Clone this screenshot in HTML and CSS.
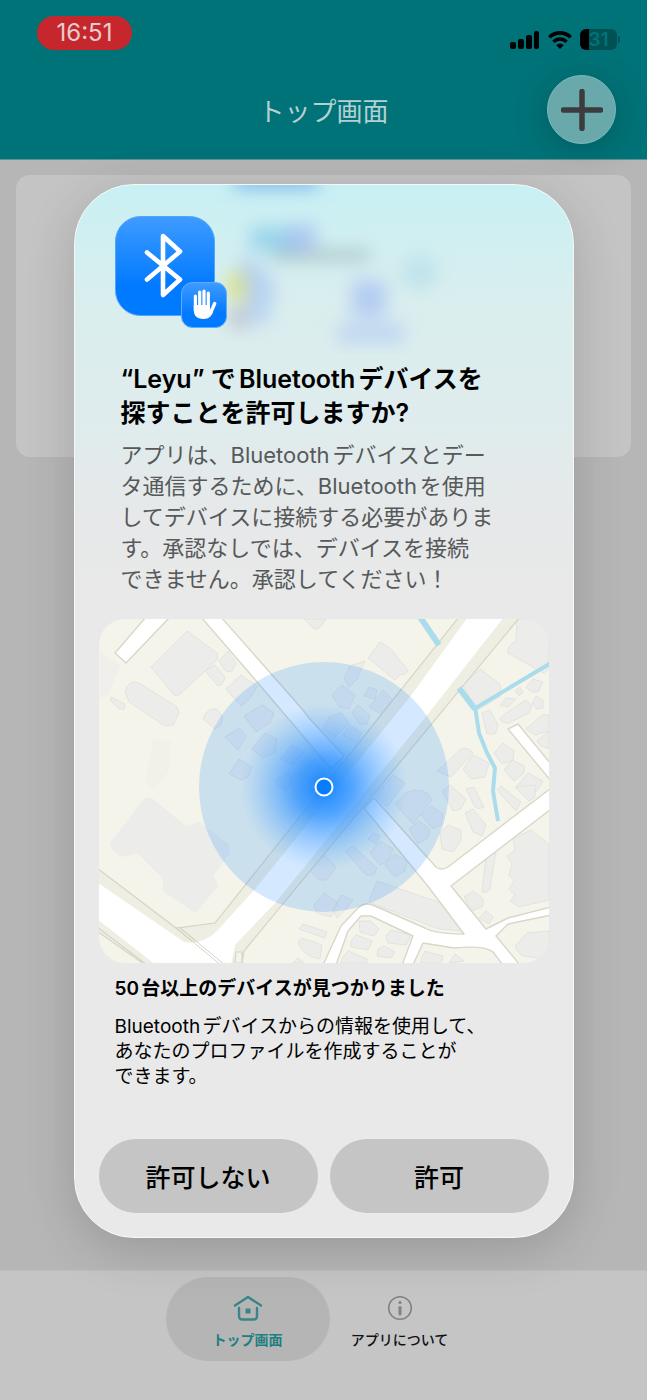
FILE: index.html
```html
<!DOCTYPE html>
<html lang="ja">
<head>
  <meta charset="UTF-8">
  <meta name="viewport" content="width=device-width, initial-scale=1">
  <title>トップ画面</title>
  <link rel="stylesheet" href="styles.css">
</head>
<body>
  <header class="app-header">
    <div class="status-bar">
      <span class="clock">16:51</span>
      <div class="status-icons">
        <svg width="30" height="20" viewBox="0 0 30 20" aria-hidden="true">
          <rect x="0" y="12" width="6" height="7" rx="2"/>
          <rect x="8" y="9" width="6" height="10" rx="2"/>
          <rect x="16" y="5" width="6" height="14" rx="2"/>
          <rect x="24" y="1" width="5" height="18" rx="2"/>
        </svg>
        <svg width="26" height="20" viewBox="0 0 26 20" aria-hidden="true">
          <path d="M2.3 7.2a15.4 15.4 0 0 1 21.4 0" fill="none" stroke="#000" stroke-width="3.6"/>
          <path d="M6.4 11.7a9.6 9.6 0 0 1 13.2 0" fill="none" stroke="#000" stroke-width="3.4"/>
          <path d="M13 19l-3.6-3.7a5.2 5.2 0 0 1 7.2 0z"/>
        </svg>
        <div class="battery">31</div>
      </div>
    </div>
    <div class="nav-bar">
      <h1>トップ画面</h1>
      <button class="add-button" type="button" aria-label="追加">
        <svg width="42" height="42" viewBox="0 0 42 42" aria-hidden="true">
          <path d="M21 2.500V39.500M2.500 21H39.500" stroke="#3c3c3e" stroke-width="5.500" stroke-linecap="round"/>
        </svg>
      </button>
    </div>
  </header>

  <main>
    <div class="card"></div>
  </main>

  <nav class="tab-bar">
    <a class="tab active" href="#top">
      <svg width="30" height="26" viewBox="0 0 30 26" fill="none" stroke="#3a8586" stroke-width="2.400" stroke-linecap="round" stroke-linejoin="round" aria-hidden="true">
        <path d="M2 10.500L15 2l13 8.500"/>
        <path d="M6 13v8.500a3 3 0 0 0 3 3h12a3 3 0 0 0 3-3V13"/>
        <rect x="12.500" y="13.500" width="5" height="5" fill="#3a8586" stroke="none"/>
      </svg>
      トップ画面
    </a>
    <a class="tab" href="#about">
      <svg width="26" height="26" viewBox="0 0 26 26" fill="none" stroke="#828282" aria-hidden="true">
        <circle cx="13" cy="13" r="11.300" stroke-width="1.500"/>
        <path d="M13 12.500v6.500" stroke-width="3" stroke-linecap="round"/>
        <circle cx="13" cy="7.500" r="1.600" fill="#828282" stroke="none"/>
      </svg>
      アプリについて
    </a>
  </nav>

  <div class="overlay">
    <section class="dialog" role="dialog" aria-labelledby="dialog-title">
      <!-- app content showing through the glass -->
      <svg class="glass" viewBox="0 0 500 170" aria-hidden="true">
        <defs><filter id="soft" x="-50%" y="-50%" width="200%" height="200%"><feGaussianBlur stdDeviation="9"/></filter></defs>
        <g filter="url(#soft)">
          <rect x="160" y="-10" width="84" height="12" fill="#5f9fe6" opacity=".9"/>
          <rect x="176" y="42" width="44" height="24" fill="#8ccdea" opacity=".8"/>
          <rect x="212" y="40" width="30" height="24" fill="#a4bdf2" opacity=".8"/>
          <rect x="198" y="66" width="98" height="9" fill="#8ea5aa" opacity=".7"/>
          <ellipse cx="165" cy="101" rx="11" ry="16" fill="#dde36a"/>
          <path d="M164 74h16l22 26l-10 40h-16z" fill="#a9c6f4" opacity=".7"/>
          <rect x="156" y="122" width="16" height="22" fill="#b2aeb8" opacity=".7"/>
          <rect x="278" y="96" width="34" height="36" fill="#a9c3f4" opacity=".8"/>
          <rect x="264" y="140" width="66" height="18" fill="#a9c3f4" opacity=".6"/>
          <circle cx="346" cy="88" r="18" fill="#b0dcea" opacity=".6"/>
        </g>
      </svg>

      <div class="permission">
        <svg class="app-icon" width="112" height="112" viewBox="0 0 112 112" aria-hidden="true">
          <defs>
            <linearGradient id="blue" x1="0" y1="0" x2="0" y2="1">
              <stop offset="0" stop-color="#3f9bff"/>
              <stop offset=".7" stop-color="#017aff"/>
              <stop offset="1" stop-color="#007aff"/>
            </linearGradient>
          </defs>
          <rect x=".5" y=".5" width="99" height="99" rx="25" fill="url(#blue)" stroke="#4fa6fb"/>
          <path d="M32 36.500L65 63.500L48 79V20L65 35.500L32 63.500" fill="none" stroke="#fff" stroke-width="4.600" stroke-linecap="round" stroke-linejoin="round"/>
          <rect x="66.500" y="66.500" width="45" height="45" rx="11" fill="url(#blue)" stroke="#5dadf8"/>
          <g stroke="#fff" stroke-linecap="round" stroke-width="3.200" fill="none">
            <path d="M80.400 80v14M84.700 76v16M89 75v17M93.300 77v16"/>
            <path d="M99.700 87.500l-4.200 9.500" stroke-width="3.400"/>
          </g>
          <path d="M78.800 89H94.900V94l3.300 1.500C96.500 100 94.500 103 88.500 103C81.500 103 78.800 99.500 78.800 94z" fill="#fff"/>
        </svg>
        <h2 id="dialog-title">“Leyu” でBluetoothデバイスを<br>探すことを許可しますか?</h2>
        <p>アプリは、Bluetoothデバイスとデー<br>タ通信するために、Bluetoothを使用<br>してデバイスに接続する必要がありま<br>す。承認なしでは、デバイスを接続<br>できません。承認してください！</p>
      </div>

      <svg class="map" viewBox="0 0 450 344" preserveAspectRatio="xMidYMid slice" role="img" aria-label="付近の地図">
        <defs>
          <radialGradient id="glow">
            <stop offset="0" stop-color="#0a80ff" stop-opacity=".95"/>
            <stop offset=".35" stop-color="#2a90ff" stop-opacity=".75"/>
            <stop offset=".7" stop-color="#4ba2ff" stop-opacity=".35"/>
            <stop offset="1" stop-color="#6ab2ff" stop-opacity="0"/>
          </radialGradient>
        </defs>
        <rect width="450" height="344" fill="#f5f4ea"/>

        <!-- blocks around the buildings -->
        <path d="M0 32L22 46L8 78H0z" fill="#f0efeb"/>
        <path d="M54 120l18 2l-2 30l-14 18l-10-6z" fill="#f2f1e8"/>

        <!-- buildings -->
        <g fill="#ececea" stroke="#e0dfd9" stroke-width=".8" stroke-linejoin="round">
          <path d="M52 48L88 12l30 22l1 6L80 76l-5 0z"/>
          <path d="M26 72q4-12 14-8l38 24l2 6l-6 12l-8 1l-36-24z"/>
          <path d="M106 52l10-6l10 12q-2 10-8 8zM120 42l9-10l8 12l-4 8q-6 2-8-2z"/>
          <path d="M127 70l15-14l16 11q-4 12-16 20zM104 100q4-12 14-10l6 8l-2 8l-6 4z"/>
          <path d="M12 78l14 7l-1 5l-5 0l-8-8zM205 0h22l-6 8q-4 4-8 0z"/>
          <path d="M11 224L43 182q5-6 11-2L87 207L100 203L130 225L131 234L115 256L119 267L99 292Q97 295 93 292L64 272V260L38 234L25 238Q12 234 11 224z" stroke="none"/>
          <path d="M269 39l12-16l10 6l18 22q0 4-8 5l-5 5z"/>
          <path d="M418 0h32v50q-5 6-9 2l-32-18q-2-6 8-12z"/>
          <path d="M364 66l17-16l20 15l1 12l-25 15z"/>
          <path d="M401 86l6-7l10 1l-8 8zM416 72l5-4l3 5l-4 4zM427 68l7-8l10 3l-5 10q-8 1-12-5zM433 84l4-7l7 4v8l-6 1z"/>
          <path d="M401 100l6-6l20-13l6 6l-3 7l-20 10q-8 0-9-4zM383 94l8-3l8 15l-3 9l-8 0z"/>
          <path d="M427 110l16-14h7v16l-14 4zM438 122l12-10v18l-8-3z"/>
          <path d="M395 134l9-10l11 8l-1 9l-11 4zM405 151l8-10l12 6v7l-10 8zM417 168l12-14l15 8l-6 10l-12 6z"/>
          <path d="M364 150l10-14l16 8l-4 14l-14 2zM338 152l24-22q8-2 12 4l-22 24z"/>
          <path d="M343 172l8-6l16 14l-5 10l-8 2zM366 194l8-4l13 16l-4 11l-9-4zM367 170l8-2l10 20q-8 4-10-2z"/>
          <path d="M398 171l4-4l20 16l-5 9zM416 168l20-2v12l-6 4z"/>
          <path d="M341 214l8-8l13 5l0 10l-8 12l-11-3z"/>
          <path d="M414 220l18-9l18 14v56l-30 7l-9-6l5-6l-6-6l5-8l-5-6l3-11l-5-8l8-6z"/>
          <path d="M387 238l10-6l-6 37q-2 6-8 4zM365 278l9-6l10 8v7l-11 5zM380 299l7-7l7 6l-4 7z"/>
          <path d="M270 282l8-20l64 22l22 28l-24-2l-68-26z"/>
          <path d="M260 302l12 0l8 8l-5 7l-14-4zM252 322l5-6l16 6l-4 9l-17-3zM287 317l5-6l20 5l-5 10l-18-2zM279 330l6-3l11 6l-4 6l-14-2zM243 340l6-8l19 8v4h-26zM322 340l4-8l18 5l-2 7h-20zM350 344l6-9l9 7z"/>
          <path d="M416 327l12-13l22-2v26q-12 2-20 0q-10 0-14-11z"/>
          <path d="M200 310l4-5l24 8l-2 6zM199 323l4-4l20 7l-2 14q-14-2-20-12zM194 344l5-5l6 5z"/>
          <path d="M215 286l10-12l14 10l-7 14l-14-4zM234 290l8-14l12 5l-6 8l-10 10zM211 252l14-16l12 12l-8 12q-8 4-14-4z"/>
          <path d="M145 97l18-11l12 8l-4 10l-14 9zM126 118l14-9l7 8l-8 14zM153 130l13-16l12 6l-2 13l-12 6zM130 155l10-15l13 8l-4 10l-7 3z"/>
          <path d="M181 140l12-14l12 8l-12 12zM200 155l14-14l12 12l-9 14zM176 162l14-10l4 10l-8 10z"/>
          <path d="M245 59l6-12l15-5l-8 18l-8 8zM233 76l10-10l13 10l-6 14l-10-2zM265 77l5-9l8 3l-2 9zM270 88l14-17l10 10l-12 14zM253 94l6-8l12 10l-3 9l-8 0zM224 110l6-12l12-4l8 10l-14 14zM244 116l6-10l13 8l-6 10z"/>
          <path d="M271 234l10-12l13 8l-5 12l-8 4zM286 246l9-11l13 6l-2 11l-10 6zM310 210l10-8l11 8l-2 9l-10 6zM322 196l10-9l12 8l-2 11l-8 4zM269 220l5-6l7 3l-4 8zM246 232l8-5l24 22l-3 7l-8 0z"/>
          <path d="M276 176l18-20l12 8l-18 24zM296 185l12-12q20-6 25 8l-19 24z"/>
        </g>

        <!-- verges -->
        <g fill="#efeee2" stroke="#d6d4c6" stroke-width="1.200">
          <path d="M360 -2L116 304L77 309L-2 249V312L45 345H143L145 332L421 -2z"/>
          <path d="M77 309L122 346M81 309L126 346M-2 308L48 346" fill="none"/>
          <path d="M137 333h6v11h-7z" fill="#f5f4ea"/>
        </g>

        <!-- roads -->
        <g fill="#fff" stroke="#d9d7ca" stroke-width="1.400" stroke-linejoin="round">
          <path d="M47 -2L16 34L27 44L71 -2zM102 -2L159 64L232 150L245 137L210 99L204 91L122 -2z"/>
          <path d="M409 110L419 105L452 145V162z"/>
          <path d="M265 189L275 179L337 248Q342 252 349 248L452 169V190L352 267L387 310L409 299L452 288V296L409 305L397 317L421 346H404L394 333Q386 326 355 329L324 324L314 346H303L314 317L272 297H262L249 312L237 346H224L242 307L259 289Q266 282 276 287L326 309Q336 315 365 315L328 266z"/>
        </g>
        <path d="M369 -2L314 74L157 269L118 312Q104 326 85 323L-2 263V300L57 346H132L136 326L177 283L329 95L405 -2z" fill="#fff"/>
        <path d="M77 309L122 346M81 309L126 346" fill="none" stroke="#d6d4c6"/>

        <!-- water -->
        <g fill="none" stroke="#abdcec">
          <path d="M321 -2L340 26M360 69L376 90" stroke-width="6"/>
          <path d="M375 90L452 44" stroke-width="4"/>
          <path d="M376 88L380 114L388 134L396 149L394 172L399 202" stroke-width="4" stroke-linejoin="round"/>
        </g>

        <!-- search radius -->
        <circle cx="225" cy="168" r="125" fill="#007aff" fill-opacity=".17"/>
        <circle cx="225" cy="168" r="84" fill="url(#glow)"/>
        <circle cx="225" cy="168" r="8.500" fill="#087cff" stroke="#fff" stroke-width="2"/>
      </svg>

      <div class="found">
        <h3>50台以上のデバイスが見つかりました</h3>
        <p>Bluetoothデバイスからの情報を使用して、<br>あなたのプロファイルを作成することが<br>できます。</p>
      </div>

      <div class="actions">
        <button type="button">許可しない</button>
        <button type="button">許可</button>
      </div>
    </section>
  </div>
</body>
</html>
```
FILE: styles.css
```css
* {
  box-sizing: border-box;
}
body {
  margin: 0;
  min-height: 100vh;
  display: flex;
  flex-direction: column;
  background-color: #b6b6b6;
  font-family: Inter, "Noto Sans CJK JP", sans-serif;
  text-autospace: normal;
  color: #000;
}
h1, h2, h3, p {
  margin: 0;
}
button {
  border: none;
  padding: 0;
  font-family: inherit;
  cursor: pointer;
}
.app-header {
  background-color: #007378;
  border-bottom: 1px solid #5c9496;
  padding-bottom: 15px;
}
.status-bar {
  display: flex;
  justify-content: space-between;
  align-items: flex-start;
  height: 75px;
  padding: 16px 30px 0 37px;
}
.clock {
  width: 95px;
  border-radius: 17px;
  background-color: #c6272d;
  color: #e6cdcd;
  font-size: 24px;
  line-height: 34px;
  text-align: center;
}
.status-icons {
  display: flex;
  align-items: center;
  gap: 7px;
  padding-top: 13px;
}
.battery {
  position: relative;
  width: 37px;
  height: 21px;
  border-radius: 6px;
  background: linear-gradient(to right, #000 9px, #005054 9px);
  color: #007378;
  font-size: 19px;
  font-weight: 600;
  line-height: 21px;
  text-align: center;
}
.battery::after {
  content: "";
  position: absolute;
  left: 38px;
  top: 7px;
  width: 2px;
  height: 7px;
  border-radius: 0 2px 2px 0;
  background-color: #005054;
}
.nav-bar {
  display: grid;
  grid-template-columns: 1fr auto 1fr;
  align-items: center;
  padding: 0 31px;
}
.nav-bar h1 {
  grid-column: 2;
  color: #b5d0d2;
  font-size: 26px;
  font-weight: 400;
}
.add-button {
  display: flex;
  align-items: center;
  justify-content: center;
  justify-self: end;
  width: 69px;
  height: 69px;
  border-radius: 50%;
  border: 1px solid #7fbabc;
  background-color: #69a9ac;
  box-shadow: 0 6px 36px rgba(0, 0, 0, 0.2);
}
main {
  flex: 1;
  padding: 15px 16px;
}
.card {
  height: 282px;
  border-radius: 14px;
  background-color: #c4c4c4;
}
.tab-bar {
  display: flex;
  justify-content: center;
  height: 130px;
  padding-top: 6px;
  border-top: 1px solid #bebebe;
  background-color: #c5c5c5;
}
.tab {
  display: flex;
  flex-direction: column;
  align-items: center;
  gap: 9px;
  width: 164px;
  height: 84px;
  padding-top: 18px;
  border-radius: 42px;
  color: #111;
  font-size: 14px;
  font-weight: 500;
  line-height: 20px;
  text-decoration: none;
}
.tab + .tab {
  margin-left: -12px;
}
.tab.active {
  background-color: #b5b5b5;
  color: #1d7f81;
  font-weight: 700;
}
.overlay {
  position: absolute;
  inset: 0;
  display: flex;
  align-items: center;
  justify-content: center;
  padding: 21px 73px 0;
  pointer-events: none;
}
.dialog {
  position: relative;
  width: 100%;
  max-width: 500px;
  padding: 31px 24px 24px;
  border: 1px solid #f4f8f8;
  border-radius: 60px;
  overflow: hidden;
  background: linear-gradient(#c8f0f4 0, #d9eeee 110px, #dfeced 230px, #e7e8e9 340px, #e9e9e9 430px);
  box-shadow: 0 12px 50px rgba(0, 0, 0, 0.16);
  pointer-events: auto;
}
.glass {
  position: absolute;
  top: 0;
  left: 0;
  width: 100%;
}
.permission {
  position: relative;
  padding: 0 16px;
}
.app-icon {
  display: block;
}
.permission h2 {
  margin-top: 34px;
  padding-left: 6px;
  font-size: 25px;
  font-weight: 600;
  line-height: 34px;
  white-space: nowrap;
}
.permission p {
  margin-top: 10px;
  padding-left: 6px;
  color: #56595a;
  font-size: 22px;
  line-height: 31px;
  white-space: nowrap;
}
.map {
  display: block;
  width: 100%;
  height: 344px;
  margin-top: 24px;
  border-radius: 26px;
}
.found {
  padding: 13px 16px 0;
  font-size: 19px;
  line-height: 25px;
  white-space: nowrap;
}
.found h3 {
  margin-bottom: 13px;
  font-size: 19px;
  font-weight: 600;
}
.actions {
  display: grid;
  grid-template-columns: 1fr 1fr;
  gap: 12px;
  margin-top: 50px;
}
.actions button {
  height: 74px;
  border-radius: 37px;
  background-color: #c5c5c5;
  color: #000;
  font-size: 25px;
  font-weight: 500;
}
```
